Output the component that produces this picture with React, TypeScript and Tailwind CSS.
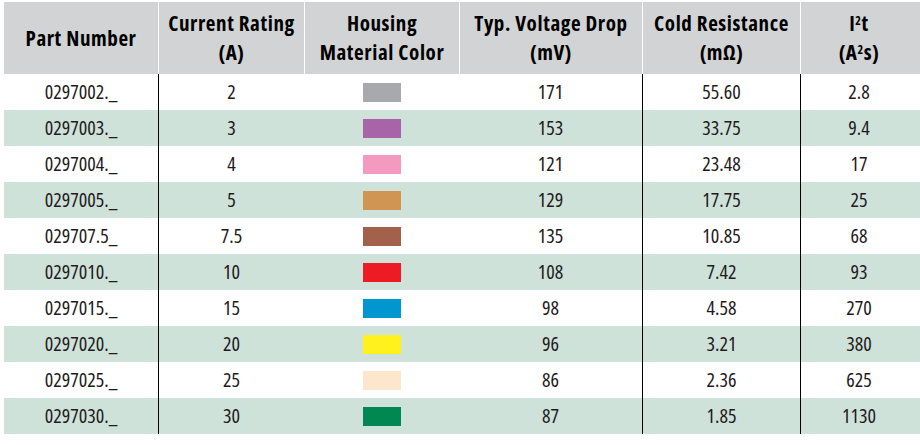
import React from "react";

const rows = [
  { part: "0297002._", amp: "2", color: "#a7a9ac", mv: "171", res: "55.60", i2t: "2.8" },
  { part: "0297003._", amp: "3", color: "#a864a8", mv: "153", res: "33.75", i2t: "9.4" },
  { part: "0297004._", amp: "4", color: "#f49ac1", mv: "121", res: "23.48", i2t: "17" },
  { part: "0297005._", amp: "5", color: "#d09552", mv: "129", res: "17.75", i2t: "25" },
  { part: "029707.5_", amp: "7.5", color: "#a3604b", mv: "135", res: "10.85", i2t: "68" },
  { part: "0297010._", amp: "10", color: "#ed1c24", mv: "108", res: "7.42", i2t: "93" },
  { part: "0297015._", amp: "15", color: "#0096d0", mv: "98", res: "4.58", i2t: "270" },
  { part: "0297020._", amp: "20", color: "#fff21c", mv: "96", res: "3.21", i2t: "380" },
  { part: "0297025._", amp: "25", color: "#fde7cc", mv: "86", res: "2.36", i2t: "625" },
  { part: "0297030._", amp: "30", color: "#008752", mv: "87", res: "1.85", i2t: "1130" },
];

const cols = "grid grid-cols-[154px_146px_155px_183px_158px_117px]";

function Label({ children }: { children: React.ReactNode }) {
  return <div className="text-center">{children}</div>;
}

export default function App() {
  return (
    <div className="min-h-screen bg-white pt-[2px] pl-[4px] font-['Open_Sans',sans-serif] [font-stretch:75%]">
      {/* Header */}
      <div className={`${cols} h-[72px] bg-[#d1d3d4] text-[21px] font-bold leading-[29px] tracking-[0.6px] text-black`}>
        <div className="flex items-center justify-center">
          <Label>Part Number</Label>
        </div>
        <div className="flex items-center justify-center border-l border-white">
          <Label>Current Rating<br />(A)</Label>
        </div>
        <div className="flex items-center justify-center border-l border-white">
          <Label>Housing<br />Material Color</Label>
        </div>
        <div className="flex items-center justify-center border-l border-white">
          <Label>Typ. Voltage Drop<br />(mV)</Label>
        </div>
        <div className="flex items-center justify-center border-l border-white">
          <Label>Cold Resistance<br />(mΩ)</Label>
        </div>
        <div className="flex items-center justify-center border-l border-white">
          <Label>
            I<sup className="text-[12px]">2</sup>t<br />(A<sup className="text-[12px]">2</sup>s)
          </Label>
        </div>
      </div>

      {/* Body */}
      {rows.map((r, i) => (
        <div
          key={r.part}
          className={`${cols} h-[36px] text-[20px] text-[#1f1b1c] ${i % 2 ? "bg-[#cfe2da]" : "bg-white"}`}
        >
          <div className="flex items-center justify-center">{r.part}</div>
          <div className="flex items-center justify-center border-l border-black">{r.amp}</div>
          <div className="flex items-center justify-center">
            <span className="h-[19px] w-[38px]" style={{ backgroundColor: r.color }} />
          </div>
          <div className="flex items-center justify-center">{r.mv}</div>
          <div className="flex items-center justify-center border-l border-black">{r.res}</div>
          <div className="flex items-center justify-center border-l border-black">{r.i2t}</div>
        </div>
      ))}
    </div>
  );
}
